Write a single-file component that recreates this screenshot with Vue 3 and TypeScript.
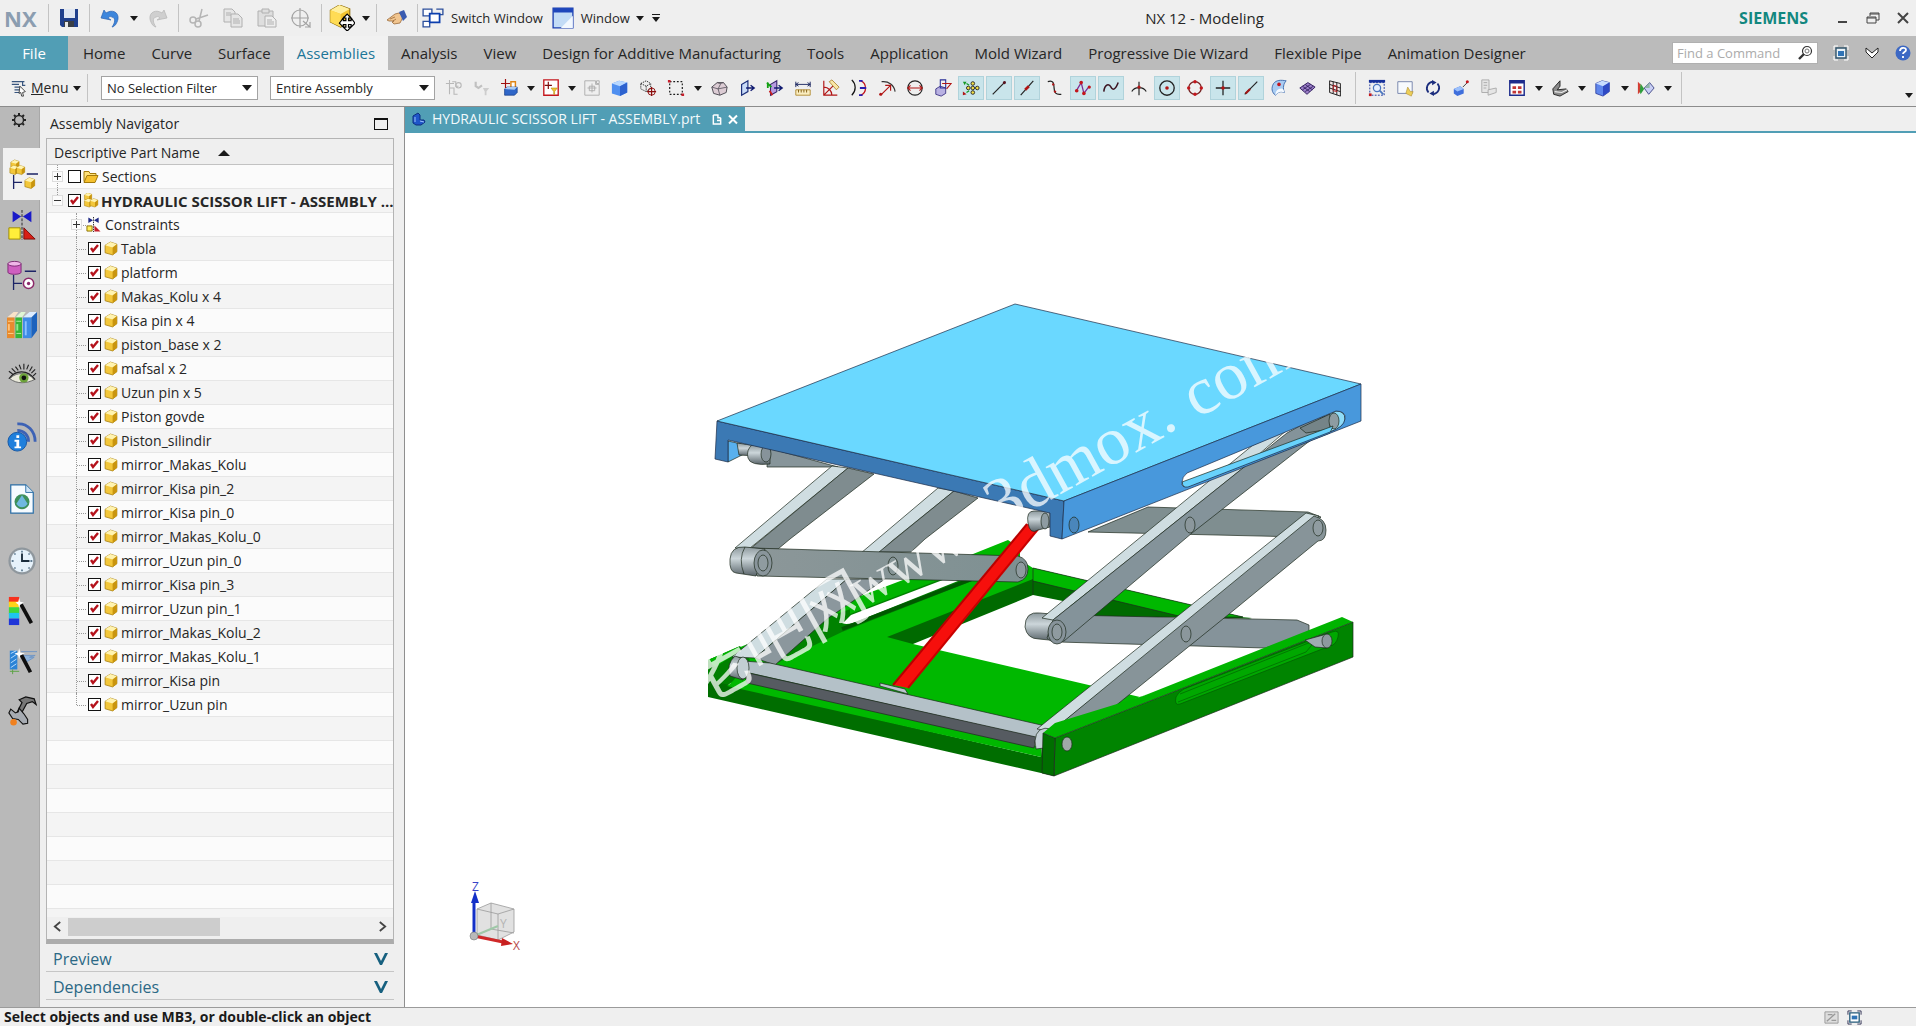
<script setup lang="ts">
import { ref } from 'vue'

type Tool = { icon?: string; kind?: 'icon' | 'arrow' | 'sep'; on?: boolean; name?: string; wide?: boolean }

const tabs: string[] = [
  'Home', 'Curve', 'Surface', 'Assemblies', 'Analysis', 'View', 'Design for Additive Manufacturing',
  'Tools', 'Application', 'Mold Wizard', 'Progressive Die Wizard', 'Flexible Pipe', 'Animation Designer',
]
const activeTab = ref('Assemblies')

const parts: string[] = [
  'Tabla', 'platform', 'Makas_Kolu x 4', 'Kisa pin x 4', 'piston_base x 2', 'mafsal x 2', 'Uzun pin x 5',
  'Piston govde', 'Piston_silindir', 'mirror_Makas_Kolu', 'mirror_Kisa pin_2', 'mirror_Kisa pin_0',
  'mirror_Makas_Kolu_0', 'mirror_Uzun pin_0', 'mirror_Kisa pin_3', 'mirror_Uzun pin_1',
  'mirror_Makas_Kolu_2', 'mirror_Makas_Kolu_1', 'mirror_Kisa pin', 'mirror_Uzun pin',
]

/* 20 x 20 toolbar glyphs */
const icons: Record<string, string> = {
  save: '<path d="M1 1h18v18H3l-2-2z" fill="#1f3f8c"/><path d="M5 1h11v9H5z" fill="#dfe6f2"/><path d="M5 13h10v6H5z" fill="#3a3f46"/><path d="M6 14h3v5H6z" fill="#e8e8e8"/>',
  undo: '<path d="M1 10 4 2l2 3c6-4 13-1 12 6-1 5-4 8-6 8 3-4 4-9 0-10-2-1-3 0-4 1l3 2z" fill="#3d86dc" stroke="#2b62b0" stroke-width=".7"/>',
  redo: '<path d="m19 10-3-8-2 3C8 1 1 4 2 11c1 5 4 8 6 8-3-4-4-9 0-10 2-1 3 0 4 1l-3 2z" fill="#cfcfcf" stroke="#b5b5b5" stroke-width=".7"/>',
  cut: '<g fill="none" stroke="#b5b5b5" stroke-width="1.5"><circle cx="4" cy="12" r="3"/><circle cx="9" cy="16" r="3"/><path d="M7 11 19 7M10 13 13 1"/></g>',
  copy: '<g fill="#e6e6e6" stroke="#b0b0b0"><path d="M1 1h8l3 3v10H1z"/><path d="M8 6h7l4 4v9H8z"/><path d="M10 11h6M10 13h7M10 15h7M3 5h5M3 7h5" fill="none"/></g>',
  paste: '<g fill="#dedede" stroke="#b0b0b0"><path d="M1 3h15v15H1z"/><path d="M5 1h7v4H5z"/><path d="M8 8h7l4 4v7H8z" fill="#eee"/><path d="M10 12h5M10 14h7M10 16h7" fill="none"/></g>',
  target: '<g fill="none" stroke="#a3a3a3" stroke-width="1.200"><circle cx="9" cy="10" r="8"/><path d="M0 10h18M9 0v20M12 13l7 6v-5M19 19h-5"/></g>',
  move: '<path d="m8 0 8 3v10l-7 4-8-4V4z" fill="#f4c430" stroke="#8f6b06" stroke-width=".8"/><path d="m1 4 8 3 7-4-8-3z" fill="#ffef9c"/><path d="M9 7v10l-8-4V4z" fill="#ffdc55"/><path d="m14 7 3 3h-2v2h2v-2l3 4-3 3v-2h-2v2h2l-3 3-3-3h2v-2h-2v2l-3-3 3-4v2h2v-2h-2z" fill="#fff" stroke="#000" stroke-width=".9"/>',
  hand: '<path d="M0 12 8 6l4-1 4 4-3 6-6 1-2-2 2-1-5 0z" fill="#f1c58f" stroke="#9a6a3a" stroke-width=".8"/><path d="m12 4 5-2 3 7-4 4z" fill="#3a5bb0"/><path d="m3 11 5-2M6 13l3-2" stroke="#9a6a3a" stroke-width=".8"/>',
  switch: '<g fill="#fff" stroke="#2c4f9c" stroke-width="1.2"><path d="M1 2h8v6H1z"/><path d="M1 13h6v5H1z"/><path d="M13 2h6v5h-3" fill="none"/><path d="M7 6h9v8H7z" stroke="#0c3fae" stroke-width="1.6"/></g>',
  window: '<path d="M1 1h18v18H1z" fill="#c3dcf6" stroke="#1b3fb0" stroke-width="1.2"/><path d="M1 1h18v4H1z" fill="#1e46bb"/><path d="M8 19 19 8v11z" fill="#f2f8fe"/>',
  menu: '<g fill="none" stroke="#38557e" stroke-width="1.3"><path d="M2 3h14M2 6h8M5 9h6M5 12h5M5 15h5M14 3v4h3"/></g><path d="m11 8 6 6-3 1 1 4-2 0-1-4-2 1z" fill="#fff" stroke="#222" stroke-width=".9"/>',
  ghostA: '<g fill="none" stroke="#b8b8b8" stroke-width="1.200"><path d="M1 5h9M5 1v16M5 10h5v7h4M8 3h4v5h3"/><circle cx="15" cy="7" r="3"/></g>',
  ghostB: '<path d="M3 3v5l3 2 4-3" fill="none" stroke="#c0c0c0" stroke-width="2.4"/><path d="M11 10h7l-3 4v4h-2v-4z" fill="#cdcdcd"/>',
  stampA: '<path d="M11 3h5v7h-5z" fill="#fff" stroke="#e08514" stroke-width="1.6"/><path d="m4 11 3-2h11v6l-3 3H4z" fill="#2f66c8" stroke="#163d86" stroke-width=".8"/><path d="m4 11 3-2h11l-3 3z" fill="#a9cbf5"/><path d="M0 5h10M5 0v10" stroke="#a01010" stroke-width="1.3"/>',
  stampB: '<path d="M2 1h16v17H2z" fill="#fff" stroke="#c4161c" stroke-width="1.5"/><path d="M3 7h8M7 3v8" stroke="#7b0b0b" stroke-width="1.3"/><path d="M10 10h7l-3 4v3h-1v-3z" fill="#f0c333" stroke="#b58a00" stroke-width=".6"/>',
  ghostC: '<g fill="none" stroke="#ababab"><path d="M2 2h12v4h4v12H2z"/><path d="M5 10h10M10 5v10M7 8h6v5H7zM15 2h3v3h-3z"/></g>',
  solid: '<path d="m1 5 8-3 9 2v11l-8 4-9-3z" fill="#4f8ff0"/><path d="m1 5 9 3 8-4-9-2z" fill="#b8d8ff"/><path d="M10 8v11l8-4V4z" fill="#2d62cf"/>',
  wireMove: '<path d="m2 5 6-3 5 3v6l-5 3-6-3zM2 5l6 3 5-3M8 8v6" fill="none" stroke="#222" stroke-dasharray="1.5 1"/><circle cx="14" cy="14" r="4" fill="none" stroke="#8c0d0d"/><path d="M9 14h10M14 9v10" stroke="#8c0d0d" stroke-width="1.3"/>',
  marquee: '<path d="M3 3h14v14H3z" fill="none" stroke="#1a1a1a" stroke-width="1.3" stroke-dasharray="2 2"/><path d="M1 1h3v3H1zM16 16h3v3h-3z" fill="#c71f2b"/>',
  rubble: '<path d="m2 9 6-5 7 0 4 5-1 6-7 3-7-2z" fill="#dcccd4" stroke="#44424a"/><path d="m2 9 7 2 10-2M9 11l2 7M8 4l3 1 4-1M9 11l3-6" fill="none" stroke="#54505a" stroke-width=".9"/>',
  plateA: '<path d="m4 6 7-4v12l-7 4z" fill="#c9dbf7" stroke="#1b2f7a" stroke-width="1.300"/><path d="M9 10h8m-3-3 4 3-4 3" fill="none" stroke="#101a70" stroke-width="1.5"/>',
  plateB: '<path d="m5 6 7-4v12l-7 4z" fill="#b79be0" stroke="#35256b" stroke-width="1.200"/><path d="M1 4 6 9M2 4v6" stroke="#12a012" stroke-width="2"/><path d="m4 13 3 5" stroke="#c81e1e" stroke-width="2"/><path d="M9 10h8m-3-3 4 3-4 3" fill="none" stroke="#101a70" stroke-width="1.5"/>',
  ruler: '<path d="M2 3v6M18 3v6M2 6h16M5 4 2 6l3 2M15 4l3 2-3 2" fill="none" stroke="#15215c"/><path d="M2 12h16v6H2z" fill="#faedc0" stroke="#b08a30"/><path d="M5 12v3M8 12v3M11 12v3M14 12v3" stroke="#7a560a"/>',
  angle: '<path d="M2 2v16h15M2 18 14 6M2 9c5 0 9 4 9 9" fill="none" stroke="#b11515" stroke-width="1.3"/><path d="m8 3 3-2 8 8-3 3z" fill="#f8e6a6" stroke="#a07414" stroke-width=".8"/>',
  arcs: '<path d="M2 1c5 5 5 12 0 17" fill="none" stroke="#141414" stroke-width="1.4"/><path d="M12 2c7 3 7 13 0 16" fill="none" stroke="#c3161c" stroke-width="1.4"/><path d="M11 10h7M10 2h4M10 18h4" stroke="#2b1cb0" stroke-width="2"/>',
  radius: '<path d="M4 3c8-1 14 4 15 11" fill="none" stroke="#333" stroke-width="1.3"/><path d="M3 18 14 7m-6 0h6v6" fill="none" stroke="#b11515" stroke-width="1.3"/><circle cx="3" cy="17" r="1.7" fill="#b11515"/>',
  diameter: '<circle cx="10" cy="10" r="8" fill="none" stroke="#222" stroke-width="1.3"/><path d="M2 10h16M5 7l-3 3 3 3M15 7l3 3-3 3" fill="none" stroke="#b11515" stroke-width="1.3"/>',
  datum: '<path d="m2 11 5-3 6 2v6l-5 3-6-2z" fill="#b9b1e2" stroke="#3d3486"/><path d="M7 1h6v9H7z" fill="none" stroke="#2a2f98" stroke-width="1.2"/><path d="M9 5h10l-5 6" fill="none" stroke="#b11515" stroke-width="1.200"/>',
  dots: '<g fill="#f2de45" stroke="#222"><circle cx="12" cy="10" r="2"/><circle cx="12" cy="5" r="2"/><circle cx="12" cy="15" r="2"/><circle cx="7" cy="10" r="2"/><circle cx="17" cy="10" r="2"/></g><path d="M1 3l4 0-2 4z" fill="#149a26"/><path d="m1 14 4 3-4 1z" fill="#b11515"/><path d="m5 5 3 2M5 15l3-2" stroke="#149a26" stroke-width="1.400"/>',
  line: '<path d="M3 17 17 3" stroke="#222" stroke-width="1.3"/><circle cx="16" cy="4" r="1.7" fill="#5a1420"/>',
  lineMid: '<path d="M3 18 17 2" stroke="#222" stroke-width="1.3"/><path d="m8 12 4-4" stroke="#b11515" stroke-width="3"/>',
  hook: '<path d="M2 3c6-2 7 2 7 7s2 8 8 7" fill="none" stroke="#222" stroke-width="1.4"/><circle cx="8" cy="6" r="1.3" fill="#b11515"/><circle cx="10" cy="14" r="1.3" fill="#b11515"/>',
  zig: '<path d="m2 14 6-10 3 12 6-8" fill="none" stroke="#7d2a96" stroke-width="1.4"/><g fill="#c3161c"><circle cx="3" cy="13" r="2"/><circle cx="8" cy="4" r="2"/><circle cx="11" cy="16" r="2"/><circle cx="17" cy="9" r="1.8"/></g>',
  wave: '<path d="M2 14c1-9 6-9 8-5s5 3 8-5" fill="none" stroke="#3c1420" stroke-width="1.7"/>',
  cross: '<path d="M2 14c3-6 13-6 16 0M10 3v15" fill="none" stroke="#222" stroke-width="1.3"/><circle cx="10" cy="9" r="1.8" fill="#b11515"/>',
  circleDot: '<circle cx="10" cy="10" r="8" fill="none" stroke="#222" stroke-width="1.5"/><circle cx="10" cy="10" r="2" fill="#b11515"/>',
  circleQuad: '<circle cx="10" cy="10" r="7" fill="none" stroke="#722" stroke-width="1.4"/><g fill="#c3161c"><circle cx="10" cy="3" r="1.9"/><circle cx="10" cy="17" r="1.9"/><circle cx="3" cy="10" r="1.9"/><circle cx="17" cy="10" r="1.9"/></g>',
  plus: '<path d="M10 2v16M2 10h16" stroke="#222" stroke-width="1.4"/><circle cx="10" cy="10" r="2" fill="#b11515"/>',
  lineOn: '<path d="M3 17 17 3" stroke="#222" stroke-width="1.3"/><path d="m4 16 5-5" stroke="#a01818" stroke-width="2.4"/>',
  sheet: '<path d="M4 5c3-4 8-4 14-3-3 3-4 8-2 13-5-2-7 0-10 3-4-3-5-8-2-13z" fill="#a9ccf2" stroke="#3a68ad"/><path d="M10 11c3-1 5-1 6 4-5-2-7 0-10 3 0-3 1-6 4-7z" fill="#f4f9ff"/><circle cx="10" cy="6" r="2" fill="#c3161c"/>',
  mesh: '<path d="m2 10 9-6 8 5-9 8z" fill="#9b7fc7" stroke="#2c1a5a"/><path d="m5 8 8 6M8 6l8 6M5 12l9-6M8 14l9-6" stroke="#2c1a5a" stroke-width=".9"/>',
  grid: '<path d="m4 2 12 3v14L4 15z" fill="#f4e9e9" stroke="#111"/><path d="m4 6 12 4M4 10l12 4M8 3v13M12 4v14" stroke="#111"/><path d="m8 7 4 1v6l-4-1z" fill="none" stroke="#c3161c"/>',
  zoomFit: '<path d="M2 4h16v14H2z" fill="none" stroke="#16309b" stroke-dasharray="2 1.5"/><path d="M1 1h18v3H1z" fill="#16309b"/><circle cx="10" cy="10" r="4" fill="#e6f0ff" stroke="#4a76bf" stroke-width="1.4"/><path d="m13 13 4 4" stroke="#4a76bf" stroke-width="2"/><path d="M1 16h3v3H1z" fill="#c3161c"/>',
  note: '<path d="M2 3h16v13H2z" fill="#f7fafd" stroke="#6f7fa8"/><path d="m13 9 3 5h3l-2 5-6-3z" fill="#edcf57" stroke="#b3913a" stroke-width=".7"/>',
  rotate: '<g fill="none" stroke="#1b2d7d" stroke-width="2"><path d="M5 15C1 10 4 4 10 3M15 5c4 5 1 11-5 12"/></g><path d="m9 1 5 3-5 3zM11 19l-5-3 5-3z" fill="#1b2d7d"/>',
  prism: '<path d="m2 11 7-3 4 3v5l-7 3-4-3z" fill="#3f6fdc"/><path d="m2 11 7-3 4 3-7 3z" fill="#9cc0fb"/><path d="m12 9 5-5" stroke="#333"/><circle cx="17" cy="3" r="1.7" fill="#c3161c"/>',
  ghostD: '<g fill="#e5e5e5" stroke="#a8a8a8"><path d="M2 1h8v14H2zM4 4h4M4 7h4M4 10h3"/><path d="m9 12 9-2v5l-9 3z"/></g>',
  table: '<path d="M2 2h16v16H2z" fill="#fff" stroke="#1c2b8c" stroke-width="1.6"/><path d="M2 2h16v3H2z" fill="#1c2b8c"/><path d="M5 8h4v3H5zM11 8h4v3h-4zM5 13h4v3H5zM11 13h4v3h-4z" fill="#c23636"/>',
  shape: '<path d="m2 11 8-9v6l-3 4 10-1 2 3-9 5-7-2z" fill="#8a8a8a" stroke="#1e1e1e"/><path d="m4 14 8 1 6-3" fill="none" stroke="#eee" stroke-width="1.3"/>',
  cube: '<path d="m2 5 7-3 8 2v10l-7 5-8-3z" fill="#5f86ec" stroke="#2a3a9c" stroke-width=".9"/><path d="m2 5 8 3 7-4-8-2z" fill="#c9dcff"/><path d="M10 8v11l7-5V4z" fill="#2f49c4"/>',
  paint: '<path d="m1 3 3 3v8l-3 3z" fill="#d43d33"/><path d="m4 5 4 6-4 6-1-4z" fill="#2f9e3d"/><path d="m8 10 6-6 5 6-6 7z" fill="#c9cff5" stroke="#3d4585"/><path d="m8 10 6-6v6z" fill="#8fb4a8"/>',
}

const ic = (icon: string, name: string, on = false): Tool => ({ kind: 'icon', icon, name, on })
const ar = (wide = false): Tool => ({ kind: 'arrow', wide })
const tools: Tool[] = [
  ic('ghostA', 'Type filter'), ic('ghostB', 'Reset filter'), ic('stampA', 'Selection scope'), ar(),
  ic('stampB', 'Deselect'), ar(), ic('ghostC', 'Find in navigator'), ic('solid', 'Shaded body'), ic('wireMove', 'Move component'),
  ic('marquee', 'Rectangle select'), ar(true), ic('rubble', 'Body'), ic('plateA', 'Move face'), ic('plateB', 'Replace face'),
  ic('ruler', 'Measure distance'), ic('angle', 'Measure angle'), ic('arcs', 'Arc length'), ic('radius', 'Radius'),
  ic('diameter', 'Diameter'), ic('datum', 'Datum'), ic('dots', 'Enable snap', true), ic('line', 'End point', true),
  ic('lineMid', 'Mid point', true), ic('hook', 'Control point'), ic('zig', 'Pole', true), ic('wave', 'Spline point', true),
  ic('cross', 'Intersection'), ic('circleDot', 'Arc centre', true), ic('circleQuad', 'Quadrant'), ic('plus', 'Existing point', true),
  ic('lineOn', 'Point on curve', true), ic('sheet', 'Point on face'), ic('mesh', 'Facet vertex'), ic('grid', 'Grid point'),
  { kind: 'sep' }, ic('zoomFit', 'Fit'), ic('note', 'Zoom'), ic('rotate', 'Rotate'), ic('prism', 'Perspective'),
  ic('ghostD', 'Edit section'), ic('table', 'Layout'), ar(true), ic('shape', 'Render style'), ar(true),
  ic('cube', 'Orient view'), ar(true), ic('paint', 'Object display'), ar(true), { kind: 'sep' },
]

/* 32 x 32 resource bar glyphs */
const cubeS = (x: number, y: number, s: number): string =>
  `<g transform="translate(${x} ${y}) scale(${s})"><path d="m0 3 5-3 6 2v7l-4 3-7-2z" fill="#f3c73b" stroke="#a27a0b" stroke-width=".7"/><path d="m0 3 7 2 4-3-6-2z" fill="#fff3b0"/><path d="M7 5v7l4-3V2z" fill="#c9950f"/></g>`
const rail: { name: string; art: string; apart?: boolean; current?: boolean }[] = [
  { name: 'Assembly Navigator', current: true, art: cubeS(3, 1, 0.8) + cubeS(2, 7, 0.8) + cubeS(9, 7, 0.8) + cubeS(18, 20, 0.95) + '<path d="M6 17v15M6 25h9M20 16h12" stroke="#1c2466" stroke-width="1.4"/>' },
  { name: 'Constraint Navigator', art: '<path d="m6 1 9 6-9 6zM26 1l-9 6 9 6z" fill="#1a1ac8"/><path d="M16 0v32" stroke="#222" stroke-dasharray="3 1.5"/><path d="M2 19h12v12H2z" fill="#ffee3a" stroke="#9d8a00"/><path d="M18 19l12 12H18z" fill="#d81f16" stroke="#7c0d09"/>' },
  { name: 'Part Navigator', art: '<path d="M1 4v9c0 3 14 3 14 0V4z" fill="#cf5fc0" stroke="#7c2a73"/><ellipse cx="8" cy="4" rx="7" ry="2.5" fill="#f0b6e8" stroke="#7c2a73"/><path d="M7 16v16M7 25h9M19 12h12" stroke="#1c2466" stroke-width="1.4"/><circle cx="23" cy="25" r="5.500" fill="#fff" stroke="#8c2a6a" stroke-width="1.6"/><circle cx="23" cy="25" r="1.800" fill="#8c2a6a"/>' },
  { name: 'Reuse Library', art: '<path d="m0 8 7-6h5l-4 6z" fill="#f8e3c8"/><path d="M0 8h8v22H0z" fill="#e88a2e"/><path d="m9 8 6-6h5l-4 6z" fill="#dff6d4"/><path d="M9 8h7v22H9z" fill="#36b536"/><path d="m17 8 7-6h8l-6 6z" fill="#dcecff"/><path d="M17 8h9v22h-9z" fill="#3d8be6"/><path d="m26 8 6-6v20l-6 8z" fill="#1c62bd"/><path d="M1 12h6M1 25h6" stroke="#ffd28c"/><path d="M10 12h5M10 25h5" stroke="#b4f0a4"/><path d="M2 15v7" stroke="#ffc27a" stroke-width="2"/><path d="M11 15v7" stroke="#8fe88f" stroke-width="2"/><path d="M20 12v15" stroke="#8cc2ff" stroke-width="2"/>' },
  { name: 'View Manager', art: '<path d="M3 20c6-7 19-8 26 1-8 4-18 5-26-1z" fill="#e9e9da" stroke="#666"/><circle cx="18" cy="19" r="5" fill="#6da33a"/><circle cx="18" cy="19" r="2.500" fill="#111"/><path d="M2 20c7-10 20-10 28 1M6 15l-4-3M9 13 5 9M12 11 9 7M15 10l-2-5M18 10V4M21 10l2-5M24 12l3-5M26 14l4-4M28 17l3-3" fill="none" stroke="#222" stroke-width="1.200"/>' },
  { name: 'Internet Explorer', apart: true, art: '<g fill="none" stroke="#3d62b5" stroke-width="3"><path d="M11 2c11-1 19 8 19 19M11 9c7 0 12 5 12 12"/></g><circle cx="11" cy="21" r="10" fill="#1f7fdc" stroke="#1556a4"/><path d="M9 19h4v7h2v2H8v-2h2v-5H8v-2zM10 14h3v3h-3z" fill="#fff"/>' },
  { name: 'Web Browser', apart: true, art: '<path d="M4 1h16l8 8v22H4z" fill="#f6fbff" stroke="#2c6fa6" stroke-width="1.300"/><path d="M20 1v8h8" fill="#cfe4f5" stroke="#2c6fa6"/><circle cx="16" cy="19" r="8" fill="#3d8f5a"/><path d="m16 12 6 9c-3 5-9 5-12 0z" fill="#6fb8e0"/>' },
  { name: 'History', apart: true, art: '<circle cx="16" cy="16" r="14.500" fill="#8f979d"/><circle cx="16" cy="16" r="12" fill="#e6f2fb"/><path d="M16 8v8h8" fill="none" stroke="#1a2c3c" stroke-width="2"/><path d="M16 5v2M16 25v2M5 16h2M25 16h2M8 8l1 1M23 23l1 1M24 8l-1 1M8 24l1-1" stroke="#35566f" stroke-width="1.400"/>' },
  { name: 'Process Studio', art: '<path d="M2 1h11v6H2z" fill="#f6311e"/><path d="M2 6h11v6H2z" fill="#ffd21a"/><path d="M2 12h11v7H2z" fill="#3fd83a"/><path d="M2 18h11v6H2z" fill="#1ec6ee"/><path d="M2 24h11v7H2z" fill="#1f35d8"/><path d="m15 9 11 20" stroke="#0e0e0e" stroke-width="4"/><path d="m13 2 1 4 4 1-4 2-1 4-1-4-3-2 3-1z" fill="#fff"/>' },
  { name: 'Manufacturing Wizards', art: '<path d="M3 5h8v20H3z" fill="#2b83d6"/><path d="m4 8 6-3M4 13l6-4M4 18l6-4M4 23l6-4" stroke="#bfe0ff"/><path d="M15 6h17M16 10h14l-6 2h5l-10 6z" fill="#8fb3da" stroke="#6f95c4"/><path d="m15 9 10 19" stroke="#0e0e0e" stroke-width="4"/><path d="m13 2 1 5 5 1-5 2-1 4-1-4-4-2 4-1z" fill="#fff"/><path d="M3 27h10M6 25v5" stroke="#5aa342"/>' },
  { name: 'Roles', art: '<path d="m13 4 7-3 9 2 2 6-4-3-6 2-7 13-4-2 6-12z" fill="#777" stroke="#111" stroke-width="1.300"/><path d="m4 14 5 4 3-1 1-4 5 6 4 6v4l-5 1-5-5-6-1-4-6z" fill="#a6abb2" stroke="#111" stroke-width="1.200"/><circle cx="7" cy="28" r="3.500" fill="#f0801e"/>' },
]

const filterOptions = ['No Selection Filter', 'Component', 'Face', 'Edge']
const scopeOptions = ['Entire Assembly', 'Within Work Part Only', 'Within Work Part and Components']
const filter = ref(filterOptions[0])
const scope = ref(scopeOptions[0])
</script>

<template>
  <div class="app">
    <header class="titlebar">
      <b class="nx">NX</b>
      <i class="vsep" />
      <button class="tb" aria-label="Save"><svg viewBox="0 0 20 20" v-html="icons.save" /></button>
      <i class="vsep" />
      <button class="tb" aria-label="Undo"><svg viewBox="0 0 20 20" v-html="icons.undo" /></button>
      <button class="caret" aria-label="Undo list" />
      <button class="tb" aria-label="Redo"><svg viewBox="0 0 20 20" v-html="icons.redo" /></button>
      <i class="vsep" />
      <button class="tb" aria-label="Cut"><svg viewBox="0 0 20 20" v-html="icons.cut" /></button>
      <button class="tb" aria-label="Copy"><svg viewBox="0 0 20 20" v-html="icons.copy" /></button>
      <button class="tb" aria-label="Paste"><svg viewBox="0 0 20 20" v-html="icons.paste" /></button>
      <button class="tb" aria-label="Repeat"><svg viewBox="0 0 20 20" v-html="icons.target" /></button>
      <i class="vsep" />
      <button class="tb big" aria-label="Move"><svg viewBox="0 0 20 20" v-html="icons.move" /></button>
      <button class="caret" aria-label="Move list" />
      <i class="vsep" />
      <button class="tb" aria-label="Touch mode"><svg viewBox="0 0 20 20" v-html="icons.hand" /></button>
      <i class="vsep" />
      <button class="tb text"><svg viewBox="0 0 20 20" v-html="icons.switch" />Switch Window</button>
      <button class="tb text"><svg viewBox="0 0 20 20" v-html="icons.window" />Window<i class="tri" /></button>
      <button class="over" aria-label="More"><i class="bar" /><i class="tri" /></button>
      <h1>NX 12 - Modeling</h1>
      <b class="siemens">SIEMENS</b>
      <div class="winbtns">
        <button aria-label="Minimize"><svg viewBox="0 0 14 14"><path d="M2 11h9" stroke="#444" stroke-width="2" /></svg></button>
        <button aria-label="Restore"><svg viewBox="0 0 14 14"><path d="M1 6h9v6H1zM4 5V2h9v7h-3M1 7h9M4 3h9" fill="none" stroke="#444" /></svg></button>
        <button aria-label="Close"><svg viewBox="0 0 14 14"><path d="m2 2 10 10M12 2 2 12" stroke="#444" stroke-width="2" /></svg></button>
      </div>
    </header>

    <nav class="ribbon">
      <button class="file">File</button>
      <button v-for="t in tabs" :key="t" class="tab" :class="{ on: t === activeTab }" @click="activeTab = t">{{ t }}</button>
      <div class="find">
        <input type="text" placeholder="Find a Command" aria-label="Find a Command" />
        <svg viewBox="0 0 16 16"><circle cx="10" cy="6" r="4.500" fill="none" stroke="#333" stroke-width="1.200" /><circle cx="10" cy="6" r="2" fill="none" stroke="#777" /><path d="m7 9-5 5" stroke="#333" stroke-width="2.400" /></svg>
      </div>
      <button class="rb" aria-label="Full screen"><svg viewBox="0 0 16 16"><path d="M1 5V1h4M11 1h4v4M15 11v4h-4M5 15H1v-4" fill="none" stroke="#fff" /><path d="M3 3h10v10H3z" fill="#eaf3f9" stroke="#31546b" stroke-width="1.400" /><path d="M5 6h6v5H5z" fill="#2f73b5" /></svg></button>
      <button class="rb" aria-label="Minimize ribbon"><svg viewBox="0 0 16 16"><path d="m2 3 6 5 6-5v4l-6 6-6-6z" fill="#fff" stroke="#222" /></svg></button>
      <button class="rb" aria-label="Help"><svg viewBox="0 0 16 16"><circle cx="8" cy="8" r="7.500" fill="#3c68c4" /><path d="M5 6c0-4 6-4 6-1 0 2-3 2-3 4M8 11v2" fill="none" stroke="#fff" stroke-width="1.800" /></svg></button>
    </nav>

    <div class="toolbar">
      <button class="menu"><svg viewBox="0 0 20 20" v-html="icons.menu" /><span><u>M</u>enu</span><i class="tri" /></button>
      <i class="vsep" />
      <label class="drop first"><select v-model="filter" aria-label="Selection filter"><option v-for="o in filterOptions" :key="o">{{ o }}</option></select></label>
      <label class="drop"><select v-model="scope" aria-label="Selection scope"><option v-for="o in scopeOptions" :key="o">{{ o }}</option></select></label>
      <div class="tools">
        <template v-for="(t, i) in tools" :key="i">
          <i v-if="t.kind === 'sep'" class="vsep" />
          <button v-else-if="t.kind === 'arrow'" class="arrow" :class="{ wide: t.wide }" aria-label="Options" />
          <button v-else class="tool" :class="{ on: t.on }" :aria-label="t.name"><svg viewBox="0 0 20 20" v-html="icons[t.icon!]" /></button>
        </template>
      </div>
      <i class="tri end" />
    </div>

    <div class="body">
      <aside class="rail">
        <button class="gear" aria-label="Resource bar options">
          <svg viewBox="0 0 16 16"><circle cx="8" cy="8" r="4.500" fill="none" stroke="#222" stroke-width="1.400" /><path d="M8 1v2M8 13v2M1 8h2M13 8h2M3 3l1.500 1.500M11.500 11.500 13 13M13 3l-1.500 1.500M4.500 11.500 3 13" stroke="#222" stroke-width="2" /></svg>
        </button>
        <button v-for="r in rail" :key="r.name" :class="{ current: r.current, apart: r.apart }" :aria-label="r.name">
          <svg viewBox="0 0 32 32" v-html="r.art" />
        </button>
      </aside>

      <section class="navigator">
        <div class="head"><h2>Assembly Navigator</h2><button aria-label="Maximize" class="max" /></div>
        <div class="box">
          <div class="colhead">Descriptive Part Name<i class="up" /></div>
          <ul class="tree">
            <li class="root">
              <button class="exp plus" aria-label="Expand" />
              <label><input type="checkbox" />
                <svg class="folder" viewBox="0 0 16 14"><path d="M1 12V2h5l1 2h6v3" fill="#ffe27a" stroke="#a47a0a" /><path d="m1 13 3-7h11l-3 7z" fill="#f5c12e" stroke="#a47a0a" /></svg>
                <span>Sections</span></label>
            </li>
            <li class="root bold">
              <button class="exp" aria-label="Collapse" />
              <label><input type="checkbox" checked />
                <svg class="folder" viewBox="0 0 16 16" v-html="cubeS(1, 0, 0.7) + cubeS(1, 6, 0.75) + cubeS(7, 6, 0.75)" />
                <span>HYDRAULIC SCISSOR LIFT - ASSEMBLY ...</span></label>
            </li>
            <li class="leaf constraints">
              <button class="exp plus" aria-label="Expand" />
              <svg class="cons" viewBox="0 0 32 32"><path d="m5 1 10 6-10 6zM27 1l-10 6 10 6z" fill="#1f2a86" /><path d="M16 0v32" stroke="#222" stroke-width="2" stroke-dasharray="3 2" /><path d="M2 19h11v11H2z" fill="#ffef5a" stroke="#8a6d00" stroke-width="2" /><path d="M18 18l13 13H18z" fill="#c41f2b" /></svg>
              <span>Constraints</span>
            </li>
            <li v-for="p in parts" :key="p" class="leaf">
              <label><input type="checkbox" checked /><svg class="part" viewBox="0 0 13 14" v-html="cubeS(1, 1, 1)" /><span>{{ p }}</span></label>
            </li>
            <li v-for="n in 9" :key="'e' + n" class="empty" />
          </ul>
          <div class="hscroll">
            <button aria-label="Scroll left"><svg viewBox="0 0 10 12"><path d="M8 1 2 6l6 5" fill="none" stroke="#444" stroke-width="2" /></svg></button>
            <div class="track"><i class="thumb" /></div>
            <button aria-label="Scroll right"><svg viewBox="0 0 10 12"><path d="m2 1 6 5-6 5" fill="none" stroke="#444" stroke-width="2" /></svg></button>
          </div>
        </div>
        <button class="fold">Preview<svg viewBox="0 0 14 12"><path d="M0 0h3l4 8 4-8h3L8 12H6z" fill="#17607f" /></svg></button>
        <button class="fold">Dependencies<svg viewBox="0 0 14 12"><path d="M0 0h3l4 8 4-8h3L8 12H6z" fill="#17607f" /></svg></button>
      </section>

      <main class="work">
        <div class="doctabs">
          <div class="doctab">
            <svg class="docicon" viewBox="0 0 14 14"><path d="M1 4 6 1l2 2v5h4l1 2-4 3H4l-3-2z" fill="#1f55c9" stroke="#0c2e80" /><path d="M3 5v5M8 9l4 1" stroke="#9cc4ff" /></svg>
            <span>HYDRAULIC SCISSOR LIFT - ASSEMBLY.prt</span>
            <svg class="mini" viewBox="0 0 10 12"><path d="M1 1h5v3h3M9 8v3H1V1M5 7h4V4" fill="none" stroke="#fff" stroke-width="1.600" /></svg>
            <button aria-label="Close tab"><svg class="mini" viewBox="0 0 10 10"><path d="m1 1 8 8M9 1 1 9" stroke="#fff" stroke-width="2" /></svg></button>
          </div>
        </div>
        <svg class="scene" viewBox="405 133 1511 874" preserveAspectRatio="xMidYMid meet">
          <defs>
            <linearGradient id="barrel" x1="0" y1="0" x2="0" y2="1"><stop offset="0" stop-color="#8d999d" /><stop offset=".4" stop-color="#ccd6da" /><stop offset="1" stop-color="#59646a" /></linearGradient>
            <linearGradient id="flat" x1="0" y1="0" x2="1" y2="0"><stop offset="0" stop-color="#8c9799" /><stop offset="1" stop-color="#7e9092" /></linearGradient>
          </defs>
          <g stroke="#1c2a1c" stroke-width=".7" stroke-linejoin="round">
            <!-- base frame -->
            <path d="M708 660 1008 540l12 8v12l13 8 210 49-60 60-43 20-87 36-345-53z" fill="#00b800" stroke="none" />
            <path d="M708 660 740 646 750 660 733 681 727 686 708 680z" fill="#008000" stroke="none" />
            <path d="M708 660 738 647 742 650 715 667z" fill="#00b400" stroke="none" />
            <path d="M775 664 830 616 842 612 975 566 990 574 842 632z" fill="#008200" stroke="none" />
            <path d="M850 600 940 566 975 566 850 614z" fill="#00b400" stroke="none" />
            <path d="m843 623 8-8 97-37 10 3-105 42q-8 2-10 0z" fill="#fff" stroke="none" />
            <path d="M842 629 990 572" stroke="#005800" stroke-width="4" />
            <path d="M887 637 1033 579 1183 612 1252 618 1180 640 913 644z" fill="#006a00" stroke="none" />
            <path d="M913 644 1033 595 1063 601 1088 617 1180 617 1262 619 1302 634 1140 697z" fill="#fff" stroke="none" />
            <path d="M1033 568 1243 617h-60l-150-36z" fill="#00b800" />
            <path d="M1033 581v14" />
            <path d="m708 680 333 77 1-24 12 5v38l-346-79z" fill="#006e00" stroke="none" />
            <path d="m727 686 10-7 304 68v10z" fill="#00b800" stroke="none" />

            <!-- left scissor arms -->
            <path d="m768 448 70 19h-71z" fill="#87959a" />
            <path d="m832 466 16 2-88 72-10 8h-15z" fill="#cfdde1" />
            <path d="m848 468 26 6-84 65-12 10h-28z" fill="#7f8c8f" />
            <path d="m938 488 16 3-62 50-13 12h-18z" fill="#cfdde1" />
            <path d="m954 491 24 7-53 41-14 13h-32z" fill="#7f8c8f" />
            <path d="M732 657 827 579h20l-92 79z" fill="#cfdde1" />
            <path d="m755 658 92-79h38l-58 40-52 46z" fill="#8b979d" />
            <path d="M752 548 1018 556q10 3 10 13t-10 13L757 576z" fill="url(#flat)" />
            <path d="M745 547q-14-1-15 12t6 14l20 3 9-27z" fill="url(#barrel)" />
            <path d="M745 547q-7 12-1 27" fill="none" />
            <ellipse cx="763" cy="563" rx="9" ry="13" fill="#89959b" /><ellipse cx="763" cy="563" rx="5" ry="8" fill="#8f9ba0" />
            <ellipse cx="1021" cy="570" rx="5" ry="8" fill="#8f9ba0" />
            <ellipse cx="893" cy="566" rx="5" ry="9" fill="none" />

            <!-- cross bar -->
            <path d="m743 661 27 2 280 64-13 11-292-66z" fill="#b4c1c8" />
            <path d="m744 672 292 65-2 11-287-65z" fill="#565b61" />
            <path d="M735 656q-9 8-5 20l13 4 3-20z" fill="url(#barrel)" />
            <ellipse cx="743" cy="668" rx="6" ry="11" fill="#c2ced3" />

            <!-- right scissor arms -->
            <path d="m1088 532 60-25 160 5 13 5-20 20z" fill="#7f8e90" />
            <path d="m1066 615 231 5 12 5v10l-44 13-206-6z" fill="#85939a" />
            <path d="M1040 613q-15-2-15 14 2 12 14 12l20 2 3-26z" fill="url(#barrel)" />
            <path d="M1042 618 1253 445 1287 430 1243 468 1053 620z" fill="#cfdde1" />
            <path d="M1053 620 1243 468 1287 433 1320 415 1342 420 1307 443 1192 533 1064 641q-10 4-17-3z" fill="#84939a" />
            <ellipse cx="1057" cy="632" rx="9" ry="12" fill="#87939a" /><ellipse cx="1057" cy="632" rx="5" ry="8" fill="#8f9ba0" />
            <ellipse cx="1190" cy="525" rx="5" ry="8" fill="#8b979c" />
            <path d="M1037 729 1306 513l13 3-267 215z" fill="#cfdde1" />
            <path d="m1052 731 262-215q12 3 12 14t-8 11l-84 69-120 97-51 19z" fill="#879499" />
            <ellipse cx="1318" cy="528" rx="5" ry="8" fill="#909ca1" />
            <ellipse cx="1186" cy="634" rx="5" ry="8" fill="#8b979c" />
            <path d="M1052 729q-16-4-17 12l1 8 8-1 2-14z" fill="#c4d0d6" />

            <!-- base right rail -->
            <path d="m1043 733 12-10 88-27 199-79 11 5-298 116z" fill="#00b400" stroke="none" />
            <path d="M1055 738 1353 622v35l-299 119z" fill="#008400" />
            <path d="M1043 733 1055 738 1054 776 1042 773z" fill="#006e00" />
            <path d="M1176 697q2-5 8-8l148-57q8-3 6 5t-8 9l-150 58q-6 2-4-7z" fill="#00a800" stroke="#005c00" />
            <path d="m1180 694 136-54-10 12-128 50" fill="none" stroke="#006400" />
            <path d="m1305 640 22-6v14l-12-1z" fill="#a0acb1" /><ellipse cx="1327" cy="641" rx="5" ry="7" fill="#8d999e" />
            <ellipse cx="1067" cy="744" rx="5" ry="7" fill="#9fa9a6" />

            <!-- piston -->
            <path d="M893 685 1027 524l12 4-131 160z" fill="#f60f0c" stroke="none" />
            <path d="M893 685 1027 524" stroke="#b80000" stroke-width="2" /><path d="M908 688 1039 528" stroke="#c80000" stroke-width="2" />
            <path d="m880 683 25 6 3 5-28-8z" fill="#b9c6cd" />
            <path d="M1034 511q-8 0-6 12t10 7l12-3v-16z" fill="url(#barrel)" /><ellipse cx="1045" cy="521" rx="4" ry="8" fill="#8e9ca2" />

            <!-- platform -->
            <path d="m728 441 18 4v8l-18 9z" fill="#58b0ee" />
            <path d="m737 443 20 3v10l-18-1z" fill="url(#barrel)" />
            <path d="m752 445 18 3v16q-20 2-22-6-2-8 4-13z" fill="url(#barrel)" /><ellipse cx="766" cy="454" rx="5" ry="8" fill="#87939a" />
            <path d="M717 421 1064 501l-2 38-12-3v-23L728 440v22l-13-3z" fill="#3b79b4" stroke="#1d2d48" />
            <path d="m717 421 298-117 346 80-297 117z" fill="#6ad8ff" stroke="#1d2d48" />
            <path d="M1318 420 1336 411q9 0 9 8t-15 13z" fill="#8fdcf8" />
            <path d="M1300 428 1330 414v15l-24 4z" fill="#758488" /><ellipse cx="1334" cy="421" rx="5" ry="8" fill="#8e9ca2" />
            <path d="m1182 482 151-56-3 7-143 55q-4 0-5-6z" fill="#68d2fc" />
            <path fill-rule="evenodd" d="m1064 501 297-117v37l-299 118zM1187 473 1336 411q10 0 9 8t-15 13l-142 55q-7 1-6-5 0-5 5-9z" fill="#4898dc" stroke="#1d2d48" />
            <ellipse cx="1074" cy="525" rx="5" ry="8" fill="#4a86bb" />
          </g>

          <!-- watermark -->
          <g class="mark" fill="#fff" fill-opacity=".75">
            <text transform="translate(700 706) rotate(-29)" class="cjk">老吧网</text>
            <text transform="translate(862 608) rotate(-29)" class="small">www.</text>
            <text transform="translate(1000 528) rotate(-29)">3dmox</text>
            <text transform="translate(1165 435) rotate(-29)">.</text>
            <text transform="translate(1197 419) rotate(-29)">com</text>
          </g>

          <!-- view triad -->
          <g stroke="#9a9a9a" stroke-width=".8">
            <path d="m477 909 14-6 23 6v23l-16 8-21-5z" fill="#dcdcdc" fill-opacity=".85" />
            <path d="m477 909 21 5 16-5M498 914v26M491 903v26l-14 6M491 929l23 4" fill="none" />
          </g>
          <path d="m474 936 24-10" stroke="#9fc8a8" stroke-width="2" />
          <path d="M474 936V900" stroke="#1330c8" stroke-width="3" /><path d="m471 903 4-12 4 12z" fill="#1330c8" />
          <path d="m474 936 29 6" stroke="#d02828" stroke-width="3" /><path d="m502 938 11 6-12 2z" fill="#c82020" />
          <circle cx="474" cy="936" r="4" fill="#b9b9b9" stroke="#777" stroke-width=".6" />
          <g class="axis"><text x="472" y="891" fill="#3944c8">Z</text><text x="513" y="950" fill="#b64a4a">X</text><text x="500" y="928" fill="#b4b4b4">Y</text></g>
        </svg>
      </main>
    </div>

    <footer class="status">
      <b>Select objects and use MB3, or double-click an object</b>
      <svg viewBox="0 0 16 16"><path d="M1 2h14v12H1z" fill="#ddd" stroke="#999" /><path d="m3 12 9-8M4 5h5M8 11h5" stroke="#999" stroke-width="1.400" /></svg>
      <svg viewBox="0 0 16 16"><path d="M1 5V1h4M11 1h4v4M15 11v4h-4M5 15H1v-4" fill="none" stroke="#335" /><path d="M3 3h10v10H3z" fill="#fff" stroke="#245a7a" stroke-width="1.400" /><path d="M5 6h6v4H5z" fill="#2f73b5" /></svg>
    </footer>
  </div>
</template>

<style>
body { margin: 0; }
</style>

<style scoped>
.app {
  display: flex; flex-direction: column; min-height: 100vh; background: #efefef; color: #262626;
  font-family: "Open Sans", "Noto Sans", "Noto Sans CJK SC", sans-serif; font-size: 14px; line-height: 20px;
}
.app * { box-sizing: border-box; }
button { font: inherit; color: inherit; background: none; border: 0; padding: 0; margin: 0; }
svg { display: block; flex: none; }
.tri { display: block; border: 4px solid transparent; border-top: 5px solid #1a1a1a; border-bottom: 0; flex: none; }
.vsep { width: 1px; align-self: stretch; background: #c3c3c3; margin: 4px 3px; flex: none; }

.titlebar { display: flex; align-items: center; height: 36px; }
.nx { font-size: 22px; color: #8b9db0; margin-left: 4px; width: 41px; }
.tb { width: 26px; height: 26px; margin: 0 4px; display: flex; align-items: center; justify-content: center; flex: none; }
.tb svg { width: 20px; height: 20px; }
.tb.big svg { width: 26px; height: 26px; }
.tb.text { width: auto; gap: 6px; margin: 0 8px 0 0; font-size: 13px; }
.tb.text svg { width: 24px; height: 22px; }
.caret, .arrow { width: 14px; height: 20px; display: flex; align-items: center; justify-content: center; flex: none; }
.caret::after, .arrow::after { content: ""; border: 4px solid transparent; border-top: 5px solid #1a1a1a; border-bottom: 0; }
.over { display: flex; flex-direction: column; gap: 2px; }
.bar { width: 8px; height: 1px; background: #1a1a1a; }
.titlebar h1 { margin: 0 auto; padding-left: 10px; font-size: 15px; font-weight: 400; }
.siemens { margin-right: 28px; color: #12877f; font-size: 16px; }
.winbtns { display: flex; gap: 16px; margin-right: 6px; }
.winbtns svg { width: 14px; height: 14px; }

.ribbon { display: flex; height: 34px; background: #bbbbbb; align-items: stretch; font-size: 15px; }
.ribbon button { flex: none; }
.file { width: 68px; background: #519eb5; color: #fff; margin-right: 2px; }
.tab { padding: 0 13px 1px; }
.tab.on { background: #f1f1f1; color: #1c7698; }
.find { margin-left: auto; width: 146px; height: 22px; align-self: center; display: flex; align-items: center; background: #fff; border: 1px solid #b0b0b0; padding: 0 4px; }
.find input { flex: 1; min-width: 0; border: 0; outline: 0; padding: 0; font: inherit; font-size: 13px; background: none; }
.find input::placeholder { color: #ababab; opacity: 1; }
.find svg { width: 16px; height: 16px; }
.rb { width: 16px; margin-left: 15px; display: flex; align-items: center; }
.rb:last-child { margin-right: 5px; }
.rb svg { width: 16px; height: 16px; }

.toolbar { display: flex; align-items: center; height: 37px; border-bottom: 1px solid #8c8c8c; }
.menu { display: flex; align-items: center; gap: 3px; margin-left: 10px; width: 71px; font-size: 14px; flex: none; }
.menu svg { width: 18px; height: 18px; }
.menu .tri { margin-left: auto; }
.toolbar > .vsep { margin-left: 6px; margin-right: 13px; }
.drop { width: 165px; height: 24px; position: relative; margin-left: 12px; flex: none; }
.drop.first { width: 157px; margin-left: 0; }
.drop select { appearance: none; width: 100%; height: 24px; border: 1px solid #a3a3a3; background: #fff; border-radius: 0; font: inherit; font-size: 13px; color: #262626; padding: 0 5px; }
.drop::after { content: ""; position: absolute; right: 6px; top: 9px; border: 5px solid transparent; border-top: 6px solid #1a1a1a; border-bottom: 0; pointer-events: none; }
.tools { display: flex; align-items: center; height: 36px; margin-left: 5px; }
.tool { width: 28px; height: 24px; display: flex; align-items: center; justify-content: center; border: 1px solid transparent; flex: none; }
.tool.on { background: #c9e5eb; border: 1px solid #b0d3db; width: 26px; margin: 0 1px; }
.tool svg { width: 18px; height: 18px; }
.tools .arrow { width: 13px; }
.tools .arrow.wide { width: 15px; }
.tools .vsep { margin: 2px 7px 2px 6px; }
.tri.end { margin-left: auto; margin-right: 3px; align-self: flex-end; margin-bottom: 8px; }

.body { flex: 1; display: flex; align-items: stretch; }
.rail { width: 40px; background: #b9b9b9; display: flex; flex-direction: column; border-right: 1px solid #a8a8a8; flex: none; }
.rail button { height: 50px; padding-left: 7px; display: flex; align-items: center; flex: none; }
.rail .gear { height: 41px; padding: 5px 0 0 11px; align-items: flex-start; }
.rail .gear svg { width: 16px; height: 16px; }
.rail svg { width: 30px; height: 30px; }
.rail .current { height: 52px; background: #f1f1f1; margin-left: 3px; margin-right: -1px; padding-left: 5px; }
.rail .apart { margin-top: 12px; }

.navigator { width: 365px; padding: 0 10px 7px 6px; border-right: 1px solid #8f8f8f; flex: none; display: flex; flex-direction: column; }
.head { height: 31px; display: flex; align-items: center; justify-content: space-between; padding: 3px 6px 0 4px; }
.head h2 { font-size: 14px; font-weight: 400; margin: 0; }
.max { width: 14px; height: 12px; border: 1px solid #111; border-top-width: 2px; }
.box { border: 1px solid #b4b4b4; border-bottom: 5px solid #acacac; display: flex; flex-direction: column; flex: 1; }
.colhead { height: 26px; display: flex; align-items: center; gap: 18px; padding-left: 7px; border-bottom: 1px solid #c2c2c2; padding-top: 2px; }
.up { border: 6px solid transparent; border-bottom: 6px solid #1a1a1a; border-top: 0; }
.tree { list-style: none; margin: 0; padding: 0; flex: 1 0 0; overflow: hidden; background: #f5f5f5; }
.tree li { height: 24px; display: flex; align-items: center; border-bottom: 1px solid #e6e6e6; position: relative; background: #fbfbfb; white-space: nowrap; }
.tree li:nth-child(even) { background: #f4f4f4; }
.tree label { display: flex; align-items: center; }
.tree input { appearance: none; width: 13px; height: 13px; border: 1px solid #111; background: #fff; margin: 0; flex: none; }
.tree input:checked { background: #fff url('data:image/svg+xml,<svg xmlns="http://www.w3.org/2000/svg" viewBox="0 0 11 11"><path d="M2 5l2 3 5-6" fill="none" stroke="%23b5121b" stroke-width="2.400"/></svg>') center / 11px 11px; }
.root { padding-left: 5px; }
.root::before { content: ""; position: absolute; left: 10px; top: 0; height: 23px; border-left: 1px dotted #999; }
.bold::before { height: 8px; }
.exp { width: 11px; height: 11px; margin-right: 5px; background: linear-gradient(#333, #333) center / 7px 1px no-repeat #fbfbfb; border: 1px solid #ddd; position: relative; flex: none; }
.exp.plus { background: linear-gradient(#333, #333) center / 7px 1px no-repeat, linear-gradient(#333, #333) center / 1px 7px no-repeat, #fbfbfb; }
.folder { width: 16px; height: 15px; margin: 0 3px 0 2px; }
.bold { font-weight: 700; font-size: 15px; }
.bold .folder { margin-right: 2px; }
.leaf { padding-left: 41px; }
.leaf::before { content: ""; position: absolute; left: 29px; top: 0; height: 24px; border-left: 1px dotted #999; }
.leaf::after { content: ""; position: absolute; left: 30px; top: 12px; width: 9px; border-top: 1px dotted #999; }
.leaf.constraints { padding-left: 24px; }
.constraints .exp { margin-right: 4px; z-index: 1; }
.cons { width: 15px; height: 15px; margin-right: 4px; z-index: 1; }
.leaf:nth-child(23)::before { height: 12px; }
.part { width: 14px; height: 15px; margin: 0 3px; }
.hscroll { height: 22px; padding-bottom: 3px; display: flex; align-items: center; background: #efefef; flex: none; }
.hscroll button { width: 21px; display: flex; justify-content: center; }
.hscroll svg { width: 9px; height: 11px; }
.track { flex: 1; height: 18px; display: flex; }
.thumb { width: 50%; background: #cdcdcd; }
.fold { height: 28px; display: flex; align-items: center; justify-content: space-between; border-bottom: 1px solid #c6c6c6; padding: 3px 6px 0 7px; color: #2b6885; font-size: 16px; }
.fold svg { width: 14px; height: 12px; }

.work { flex: 1; min-width: 0; display: flex; flex-direction: column; background: #fff; }
.doctabs { height: 26px; display: flex; background: #efefef; border-bottom: 2px solid #519eb5; }
.doctab { display: flex; align-items: center; background: #519eb5; color: #f3fafc; padding: 0 7px; white-space: nowrap; gap: 6px; }
.doctab span { margin-right: 6px; }
.docicon { width: 14px; height: 14px; }
.mini { width: 10px; height: 11px; }
.scene { flex: 1 1 0; width: 100%; min-height: 0; }
.mark { font-family: "Liberation Serif", serif; font-size: 68px; }
.mark .small { font-size: 56px; }
.mark .cjk { font-family: "Noto Sans CJK SC", sans-serif; font-size: 66px; }
.axis { font-size: 12px; }

.status { height: 19px; display: flex; align-items: center; border-top: 1px solid #9b9b9b; padding: 0 54px 0 4px; gap: 8px; flex: none; font-size: 14px; line-height: 18px; }
.status b { margin-right: auto; color: #1a1a1a; }
.status svg { width: 15px; height: 15px; }
</style>
